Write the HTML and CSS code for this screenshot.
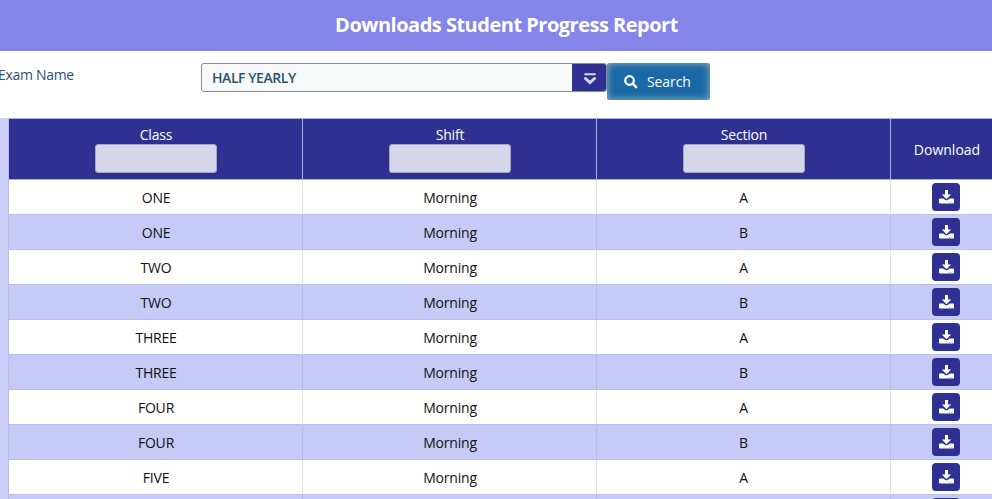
FILE: index.html
```
<!DOCTYPE html>
<html lang="en">
<head>
<meta charset="utf-8">
<title>Downloads Student Progress Report</title>
<link rel="stylesheet" href="styles.css">
</head>
<body>
<svg class="sprite" aria-hidden="true">
  <symbol id="download" viewBox="0 0 15 14">
    <path d="M6 0h3v4.500h3.200L7.500 9.300 2.800 4.500H6z"/>
    <path fill-rule="evenodd" d="M.8 8.500h3.400l1.800 1.300q1.500 1 3 0l1.800-1.300h3.400q.8 0 .8.8v3.400q0 .8-.8.8H.8q-.8 0-.8-.8V9.300q0-.8.8-.8zM10.200 12v.6h.8V12zM12.500 12v.6h.8V12z"/>
  </symbol>
</svg>
<header class="title">Downloads Student Progress Report</header>
<form class="filters">
  <label class="filter-label">Exam Name</label>
  <div class="select"><span class="select-value">HALF YEARLY</span><span class="select-toggle"><svg width="12" height="12" viewBox="0 0 12 12" fill="none" stroke="#d5d8f5" stroke-linecap="round"><path d="M1.200 1.300h9.600" stroke-width="2"/><path d="M1.500 5.500L6 9.500l4.500-4" stroke-width="3"/></svg></span></div>
  <button type="button" class="search"><svg width="14" height="14" viewBox="0 0 14 14" fill="none" stroke="#fff"><circle cx="5.500" cy="5.500" r="4.300" stroke-width="2.200"/><path d="M8.700 8.700l3.500 3.500" stroke-width="2.400" stroke-linecap="round"/></svg><span>Search</span></button>
</form>
<main class="panel">
  <table class="grid">
    <colgroup><col class="wide"><col class="wide"><col class="wide"><col class="narrow"></colgroup>
    <thead><tr>
      <th>Class<input type="text"></th><th>Shift<input type="text"></th><th>Section<input type="text"></th><th class="plain">Download</th>
    </tr></thead>
    <tbody id="rows"></tbody>
  </table>
</main>
<script src="rows.js"></script>
</body>
</html>
```
FILE: styles.css
```
* { box-sizing: border-box; }
html, body { height: 499px; overflow: hidden; }
body { margin: 0; background: #fff; font: 14px/20px "Open Sans", "Noto Sans", sans-serif; letter-spacing: -.2px; color: #111; }
.sprite { display: none; }
.title { height: 51px; padding-left: 21px; line-height: 50px; background: #8485e9; color: #fff; font-size: 20px; font-weight: 700; letter-spacing: -.5px; text-align: center; }
.filters { display: flex; align-items: flex-start; height: 67px; padding-top: 12px; }
.filter-label { width: 203px; margin-left: -2px; padding-top: 2px; color: #2b5270; letter-spacing: -.3px; }
.select { display: flex; width: 406px; height: 29px; border: 1px solid #858b9c; border-radius: 3px; background: #f8f9f9; overflow: hidden; }
.select-value { flex: 1; padding-left: 10px; line-height: 28px; color: #2b5270; font-weight: 600; letter-spacing: -.45px; }
.select-toggle { display: flex; align-items: center; justify-content: center; width: 34px; padding: 2px 0 0 2px; background: #2e3192; }
.search { display: flex; align-items: center; gap: 9px; width: 103px; height: 37px; padding: 0 0 0 17px; border: 0; border-radius: 3px; background: #1a68a6; box-shadow: inset 0 0 7px 1px #84a6b8; color: #fff; font: inherit; letter-spacing: -.1px; }
.panel { height: 381px; padding-left: 8px; background: #cfd1fd; overflow: hidden; }
.grid { width: 994px; table-layout: fixed; border-collapse: separate; border-spacing: 0; border-left: 1px solid #b9bdec; }
.wide { width: 294px; }
.narrow { width: 111px; }
th, td { padding: 0; text-align: center; font-weight: 400; }
th { height: 62px; padding-top: 6px; padding-left: 1px; vertical-align: top; background: #2e3192; color: #fff; border: solid #abb0df; border-width: 1px 1px 1px 0; }
th.plain { padding: 1px 0 0 2px; vertical-align: middle; letter-spacing: 0; }
th input { display: block; width: 122px; height: 29px; margin: -1px auto 0; border: 1px solid #a5a7ba; border-radius: 3px; background: #d5d6e9; }
td { height: 35px; padding: 2px 0 0 1px; background: #fff; border: solid #dfe1ee; border-width: 0 1px 1px 0; border-bottom-color: #bbc0e8; }
td:nth-child(3) { padding-left: 0; }
td:last-child { padding: 0; }
tr:nth-child(even) td { background: #c6caf6; border-right-color: #b7bbe6; }
.download { display: flex; align-items: center; justify-content: center; width: 28px; height: 28px; margin: 0 auto; padding: 0; border: 0; border-radius: 4px; background: #2e3192; fill: #fff; }
```
FILE: rows.js
```
const names = ["ONE", "TWO", "THREE", "FOUR", "FIVE"];
document.getElementById("rows").innerHTML = names.flatMap(name => ["A", "B"].map(section =>
  `<tr><td>${name}</td><td>Morning</td><td>${section}</td><td><button class="download" aria-label="Download"><svg width="15" height="14"><use href="#download"/></svg></button></td></tr>`
)).join("");
```
